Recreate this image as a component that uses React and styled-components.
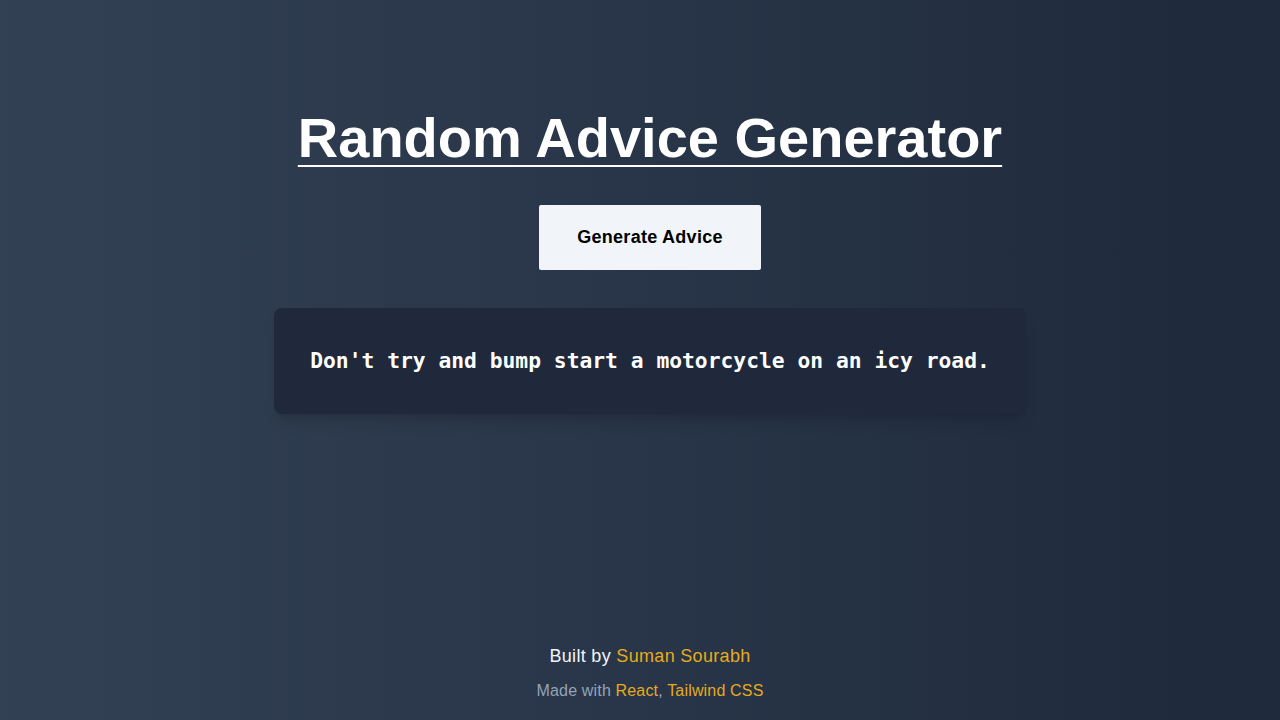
import styled, { createGlobalStyle } from "styled-components";

const GlobalStyle = createGlobalStyle`
  * {
    box-sizing: border-box;
  }
  html, body {
    margin: 0;
    padding: 0;
  }
  body {
    font-family: "Liberation Sans", Arial, sans-serif;
  }
`;

const ADVICE = "Don't try and bump start a motorcycle on an icy road.";

export default function App() {
  return (
    <>
      <GlobalStyle />
      <Page>
        <Main>
          <Title>Random Advice Generator</Title>
          <GenerateButton type="button">Generate Advice</GenerateButton>
          <AdviceCard>
            <AdviceText>{ADVICE}</AdviceText>
          </AdviceCard>
        </Main>
        <Footer>
          <Credit>
            Built by <Highlight>Suman Sourabh</Highlight>
          </Credit>
          <Stack>
            Made with <Highlight>React</Highlight>,{" "}
            <Highlight>Tailwind CSS</Highlight>
          </Stack>
        </Footer>
      </Page>
    </>
  );
}

const Page = styled.div`
  min-height: 100vh;
  padding-left: 20px;
  display: flex;
  flex-direction: column;
  align-items: center;
  background: linear-gradient(to right, #334155, #1e293b);
  color: #f1f5f9;
`;

const Main = styled.main`
  display: flex;
  flex-direction: column;
  align-items: center;
  padding-top: 106px;
`;

const Title = styled.h1`
  margin: 0;
  font-size: 56px;
  line-height: 64px;
  font-weight: 700;
  color: #ffffff;
  text-decoration: underline;
  text-decoration-thickness: 2px;
  text-underline-offset: 8px;
`;

const GenerateButton = styled.button`
  margin-top: 35px;
  padding: 18px 38px 19px;
  border: none;
  border-radius: 2px;
  background-color: #f1f5f9;
  color: #000000;
  font-family: "Liberation Sans", Arial, sans-serif;
  font-size: 18px;
  line-height: 28px;
  font-weight: 700;
  letter-spacing: 0.27px;
  cursor: pointer;
`;

const AdviceCard = styled.section`
  margin-top: 38px;
  width: 752px;
  padding: 37px 0;
  border-radius: 8px;
  background-color: #1f293b;
  box-shadow: 0 10px 15px -3px rgba(0, 0, 0, 0.12),
    0 4px 6px -4px rgba(0, 0, 0, 0.12);
  text-align: center;
`;

const AdviceText = styled.p`
  margin: 0;
  font-family: "DejaVu Sans Mono", "Liberation Mono", monospace;
  font-size: 21.3px;
  line-height: 32px;
  font-weight: 700;
  white-space: nowrap;
  color: #ffffff;
`;

const Footer = styled.footer`
  margin-top: auto;
  padding-bottom: 17px;
  display: flex;
  flex-direction: column;
  align-items: center;
  gap: 9px;
`;

const Credit = styled.p`
  margin: 0;
  font-size: 18px;
  line-height: 28px;
  letter-spacing: 0.32px;
  color: #f1f5f9;
`;

const Stack = styled.p`
  margin: 0;
  font-size: 16px;
  line-height: 24px;
  letter-spacing: 0.17px;
  color: #94a3b8;
`;

const Highlight = styled.span`
  color: #e5ab1c;
`;
